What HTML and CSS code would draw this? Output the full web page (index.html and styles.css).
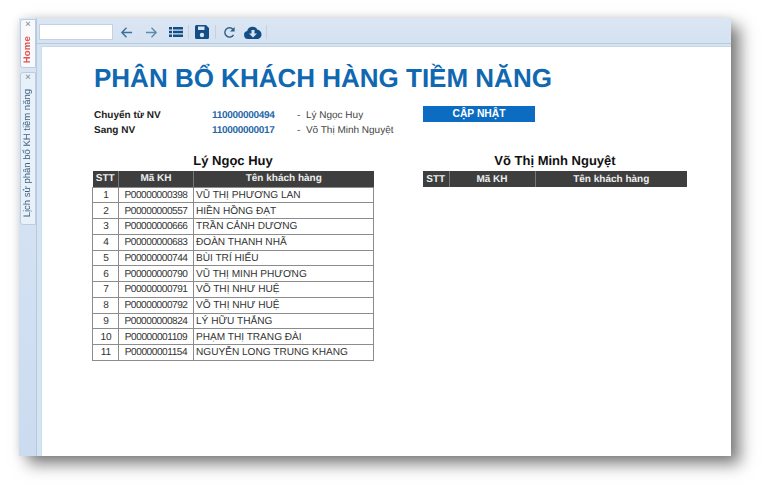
FILE: index.html
```html
<!DOCTYPE html>
<html lang="vi">
<head>
<meta charset="utf-8">
<title>Phân bổ khách hàng tiềm năng</title>
<link rel="stylesheet" href="styles.css">
</head>
<body>
<div class="window">
  <aside class="rail">
    <div class="tab tab-home"><span class="tab-x">×</span><span class="tab-label">Home</span></div>
    <div class="tab tab-history"><span class="tab-x">×</span><span class="tab-label">Lịch sử phân bổ KH tiềm năng</span></div>
  </aside>
  <div class="main">
    <div class="toolbar">
      <div class="search"></div>
      <svg class="icon icon-arrow icon-back" viewBox="0 0 14 14"><path d="M13 7H2M7 2 2 7l5 5" fill="none" stroke="#3a6f9e" stroke-width="1.500"/></svg>
      <svg class="icon icon-arrow" viewBox="0 0 14 14"><path d="M1 7h11M7 2l5 5-5 5" fill="none" stroke="#5f8aaf" stroke-width="1.500"/></svg>
      <svg class="icon icon-list" viewBox="0 0 14 12"><path d="M0 1h3v2.400H0zM4 1h10v2.400H4zM0 4.800h3v2.400H0zM4 4.800h10v2.400H4zM0 8.600h3V11H0zM4 8.600h10V11H4z" fill="#134f86"/></svg>
      <span class="sep"></span>
      <svg class="icon icon-save" viewBox="0 0 14 14"><path fill-rule="evenodd" d="M1.500 0H11l3 3v9.500A1.500 1.500 0 0 1 12.500 14h-11A1.500 1.500 0 0 1 0 12.500v-11A1.500 1.500 0 0 1 1.500 0zM3 1.500V5h6.500V1.500zM7 7.800a2.200 2.200 0 1 0 0 4.400 2.200 2.200 0 0 0 0-4.400z" fill="#134f86"/></svg>
      <span class="sep"></span>
      <svg class="icon icon-reload" viewBox="0 0 14 14"><path d="M11.300 9.500A5 5 0 1 1 10.800 3.700" fill="none" stroke="#2f5f88" stroke-width="1.500"/><path d="M12.500 1v5h-5z" fill="#2f5f88"/></svg>
      <svg class="icon icon-cloud" viewBox="0 0 18 13"><path fill-rule="evenodd" d="M4 13a4 4 0 0 1-.8-7.900A5.500 5.500 0 0 1 13.500 3.800 4.700 4.700 0 0 1 14 13zM7.500 4v3.500H5l4 4 4-4h-2.500V4z" fill="#134f86"/></svg>
      <span class="sep"></span>
    </div>
    <main class="content">
      <h1 class="title">PHÂN BỔ KHÁCH HÀNG TIỀM NĂNG</h1>
      <div class="info">
        <div class="info-rows">
          <div class="info-row"><b class="info-label">Chuyển từ NV</b><span class="info-code">110000000494</span><span class="info-name">-&nbsp; Lý Ngọc Huy</span></div>
          <div class="info-row"><b class="info-label">Sang NV</b><span class="info-code">110000000017</span><span class="info-name">-&nbsp; Võ Thị Minh Nguyệt</span></div>
        </div>
        <button class="update">CẬP NHẬT</button>
      </div>
      <div class="tables">
        <section class="panel panel-left">
          <h2 class="panel-title">Lý Ngọc Huy</h2>
          <table class="grid grid-left">
            <thead><tr><th class="c1">STT</th><th class="c2">Mã KH</th><th class="c3">Tên khách hàng</th></tr></thead>
            <tbody>
              <tr><td class="num">1</td><td class="code">P00000000398</td><td>VŨ THỊ PHƯƠNG LAN</td></tr>
              <tr><td class="num">2</td><td class="code">P00000000557</td><td>HIỀN HỒNG ĐẠT</td></tr>
              <tr><td class="num">3</td><td class="code">P00000000666</td><td>TRẦN CẢNH DƯƠNG</td></tr>
              <tr><td class="num">4</td><td class="code">P00000000683</td><td>ĐOÀN THANH NHÃ</td></tr>
              <tr><td class="num">5</td><td class="code">P00000000744</td><td>BÙI TRÍ HIẾU</td></tr>
              <tr><td class="num">6</td><td class="code">P00000000790</td><td>VŨ THỊ MINH PHƯƠNG</td></tr>
              <tr><td class="num">7</td><td class="code">P00000000791</td><td>VÕ THỊ NHƯ HUỆ</td></tr>
              <tr><td class="num">8</td><td class="code">P00000000792</td><td>VÕ THỊ NHƯ HUỆ</td></tr>
              <tr><td class="num">9</td><td class="code">P00000000824</td><td>LÝ HỮU THẮNG</td></tr>
              <tr><td class="num">10</td><td class="code">P00000001109</td><td>PHẠM THỊ TRANG ĐÀI</td></tr>
              <tr><td class="num">11</td><td class="code">P00000001154</td><td>NGUYỄN LONG TRUNG KHANG</td></tr>
            </tbody>
          </table>
        </section>
        <section class="panel panel-right">
          <h2 class="panel-title">Võ Thị Minh Nguyệt</h2>
          <table class="grid grid-right">
            <thead><tr><th class="c1">STT</th><th class="c2">Mã KH</th><th class="c3">Tên khách hàng</th></tr></thead>
          </table>
        </section>
      </div>
    </main>
  </div>
</div>
</body>
</html>
```
FILE: styles.css
```css
* { box-sizing: border-box; }
html, body { margin: 0; height: 100%; }
body {
  padding: 18px 37px 37px 19px;
  background: #fff;
  font-family: "Liberation Sans", Arial, sans-serif;
  text-rendering: geometricPrecision;
  overflow: hidden;
}
.window {
  display: flex;
  height: 438px;
  background: #d6e3f2;
  box-shadow: 9px 8px 15px rgba(0,0,0,.5), 0 0 10px rgba(0,0,0,.1);
  filter: blur(.35px);
}
.rail {
  width: 18px;
  flex: none;
  padding: 1px 0 0 1px;
  background: linear-gradient(#dbe6f4, #cbdcf0);
  border-right: 1px solid #b8c9dc;
}
.tab {
  display: flex;
  flex-direction: column;
  align-items: center;
  width: 16px;
  border: 1px solid #bccde0;
  border-radius: 3px 0 0 3px;
  background: #e8f0f9;
}
.tab-home { height: 49px; background: #f7f9fc; }
.tab-history { height: 153px; margin-top: 4px; }
.tab-x { height: 12px; font-size: 10px; line-height: 10px; color: #7c8894; }
.tab-label {
  writing-mode: vertical-rl;
  transform: rotate(180deg);
  font-size: 9.500px;
  line-height: 14px;
  color: #3d5f7f;
}
.tab-home .tab-label { color: #e5534b; font-weight: bold; margin-top: 4px; letter-spacing: .2px; }
.tab-history .tab-label { margin-top: 4px; }
.main { flex: 1; min-width: 0; display: flex; flex-direction: column; }
.toolbar {
  height: 26px;
  flex: none;
  display: flex;
  align-items: center;
  padding: 3px 0 0 2px;
  background: linear-gradient(#dbe6f4, #d5e2f1);
  border-bottom: 1px solid #b9cadb;
}
.search {
  width: 74px;
  height: 16px;
  background: #fff;
  border: 1px solid #c5d1de;
  margin-right: 7px;
}
.icon { display: block; flex: none; }
.icon-arrow { width: 13px; height: 13px; margin-right: 11px; }
.icon-back { margin-right: 12px; }
.icon-list { width: 14px; height: 12px; margin-right: 5px; }
.icon-save { width: 14px; height: 14px; margin: 0 6px 0 0; }
.icon-reload { width: 13px; height: 13px; margin: 0 8px 0 1px; }
.icon-cloud { width: 18px; height: 13px; margin-right: 4px; }
.sep { width: 1px; height: 14px; background: #c3d1e0; margin-right: 6px; }
.content {
  flex: 1;
  margin: 2px 0 0 4px;
  padding: 15px 0 0 52px;
  background: #fff;
  border-left: 1px solid #c5e0ee;
  border-top: 1px solid #c9d6e4;
  color: #222;
}
.title {
  margin: 0;
  font-size: 26px;
  line-height: 32px;
  font-weight: bold;
  color: #1068b0;
}
.info { display: flex; margin-top: 12px; }
.info-rows { width: 329px; padding-top: 2px; }
.info-row { display: flex; height: 15px; align-items: center; font-size: 10px; }
.info-label { width: 118px; color: #222; }
.info-code { width: 85px; color: #1f68a8; font-weight: bold; letter-spacing: -.3px; }
.info-name { color: #444; }
.update {
  width: 112px;
  height: 16px;
  padding: 0;
  border: 0;
  background: #0b6cc2;
  color: #fff;
  font: bold 10.300px/16px "Liberation Sans", Arial, sans-serif;
}
.tables { display: flex; margin-top: 16px; margin-left: -2px; }
.panel-left { width: 331px; }
.panel-title {
  margin: 0;
  height: 17px;
  font-size: 13px;
  line-height: 13px;
  font-weight: bold;
  text-align: center;
  color: #111;
}
.panel-left .panel-title { width: 282px; }
.panel-right .panel-title { width: 264px; }
.grid { border-collapse: collapse; table-layout: fixed; font-size: 10.100px; color: #333; }
.grid-left { width: 282px; }
.grid-right { width: 264px; }
.grid th {
  height: 16px;
  padding: 0;
  background: #3e3e3e;
  color: #eee;
  font-size: 10px;
  font-weight: bold;
  border-right: 1px solid #777;
}
.grid th:last-child { border-right: 0; }
.grid-left .c1 { width: 26px; }
.grid-left .c2 { width: 75px; }
.grid-right .c1 { width: 26px; }
.grid-right .c2 { width: 86px; }
.grid td {
  height: 15.750px;
  padding: 1px 1px 0 2px;
  border: 1px solid #8c8c8c;
  white-space: nowrap;
  line-height: 13px;
}
.grid .num { text-align: center; }
.grid .code { text-align: center; padding: 1px 0 0; letter-spacing: -.45px; }
```
